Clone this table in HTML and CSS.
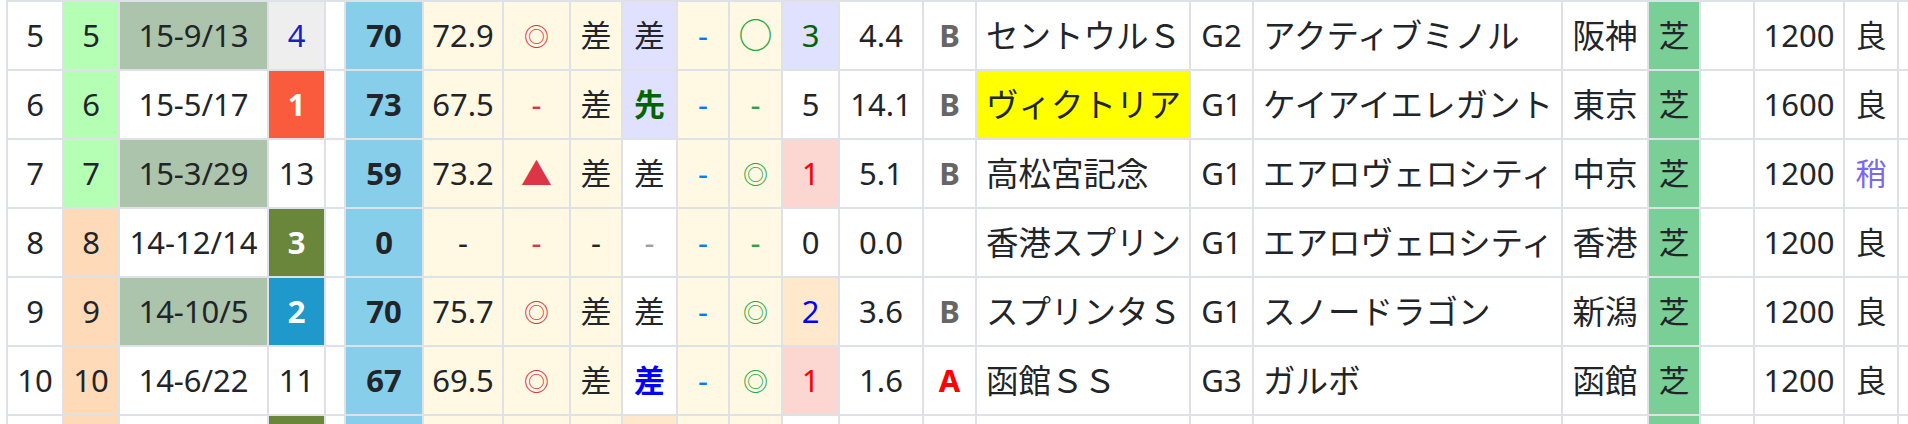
FILE: index.html
```html
<!DOCTYPE html>
<html lang="ja">
<head>
<meta charset="utf-8">
<title>戦績</title>
<link rel="stylesheet" href="styles.css">
</head>
<body>
<div class="wrap">
<table class="results">
<colgroup>
<col class="w56"><col class="w56"><col class="w149"><col class="w57"><col class="w20"><col class="w78"><col class="w80"><col class="w67"><col class="w52"><col class="w55"><col class="w52"><col class="w53"><col class="w57"><col class="w84"><col class="w53"><col class="w214"><col class="w63"><col class="w309"><col class="w86"><col class="w52"><col class="w54"><col class="w90"><col class="w54"><col class="w100">
</colgroup>
<tbody>
<tr class="edge">
<td></td><td class="bg-green"></td><td class="bg-sage"></td><td class="bg-red"></td><td></td><td class="bg-sky"></td><td class="bg-cs"></td><td class="bg-cs"></td><td class="bg-cs"></td><td class="bg-lav"></td><td class="bg-cs"></td><td class="bg-cs"></td><td class="bg-pink"></td><td></td><td></td><td></td><td></td><td></td><td></td><td class="bg-turf"></td><td></td><td></td><td></td><td></td>
</tr>
<tr>
<td>5</td><td class="bg-green">5</td><td class="bg-sage">15-9/13</td><td class="bg-gray c-mb">4</td><td></td><td class="bg-sky score">70</td><td class="bg-cs">72.9</td><td class="bg-cs c-red sym">◎</td><td class="bg-cs">差</td><td class="bg-lav">差</td><td class="bg-cs c-blue">-</td><td class="bg-cs c-green circle">○</td><td class="bg-lav c-dg">3</td><td>4.4</td><td class="grade-b">B</td><td class="l">セントウルＳ</td><td>G2</td><td class="l">アクティブミノル</td><td class="ja">阪神</td><td class="bg-turf">芝</td><td></td><td>1200</td><td>良</td><td></td>
</tr>
<tr>
<td>6</td><td class="bg-green">6</td><td>15-5/17</td><td class="bg-red rank">1</td><td></td><td class="bg-sky score">73</td><td class="bg-cs">67.5</td><td class="bg-cs c-red">-</td><td class="bg-cs">差</td><td class="bg-lav c-dg strong">先</td><td class="bg-cs c-blue">-</td><td class="bg-cs c-green">-</td><td>5</td><td>14.1</td><td class="grade-b">B</td><td class="l bg-yellow">ヴィクトリア</td><td>G1</td><td class="l">ケイアイエレガント</td><td class="ja">東京</td><td class="bg-turf">芝</td><td></td><td>1600</td><td>良</td><td></td>
</tr>
<tr>
<td>7</td><td class="bg-green">7</td><td class="bg-sage">15-3/29</td><td>13</td><td></td><td class="bg-sky score">59</td><td class="bg-cs">73.2</td><td class="bg-cs c-red">▲</td><td class="bg-cs">差</td><td>差</td><td class="bg-cs c-blue">-</td><td class="bg-cs c-green sym">◎</td><td class="bg-pink c-r">1</td><td>5.1</td><td class="grade-b">B</td><td class="l">高松宮記念</td><td>G1</td><td class="l">エアロヴェロシティ</td><td class="ja">中京</td><td class="bg-turf">芝</td><td></td><td>1200</td><td class="c-slate">稍</td><td></td>
</tr>
<tr>
<td>8</td><td class="bg-peach">8</td><td>14-12/14</td><td class="bg-olive rank">3</td><td></td><td class="bg-sky score">0</td><td class="bg-cs">-</td><td class="bg-cs c-red">-</td><td class="bg-cs">-</td><td class="c-gray">-</td><td class="bg-cs c-blue">-</td><td class="bg-cs c-green">-</td><td>0</td><td>0.0</td><td></td><td class="l">香港スプリン</td><td>G1</td><td class="l">エアロヴェロシティ</td><td class="ja">香港</td><td class="bg-turf">芝</td><td></td><td>1200</td><td>良</td><td></td>
</tr>
<tr>
<td>9</td><td class="bg-peach">9</td><td class="bg-sage">14-10/5</td><td class="bg-blue rank">2</td><td></td><td class="bg-sky score">70</td><td class="bg-cs">75.7</td><td class="bg-cs c-red sym">◎</td><td class="bg-cs">差</td><td>差</td><td class="bg-cs c-blue">-</td><td class="bg-cs c-green sym">◎</td><td class="bg-almond c-b">2</td><td>3.6</td><td class="grade-b">B</td><td class="l">スプリンタＳ</td><td>G1</td><td class="l">スノードラゴン</td><td class="ja">新潟</td><td class="bg-turf">芝</td><td></td><td>1200</td><td>良</td><td></td>
</tr>
<tr>
<td>10</td><td class="bg-peach">10</td><td>14-6/22</td><td>11</td><td></td><td class="bg-sky score">67</td><td class="bg-cs">69.5</td><td class="bg-cs c-red sym">◎</td><td class="bg-cs">差</td><td class="c-b strong">差</td><td class="bg-cs c-blue">-</td><td class="bg-cs c-green sym">◎</td><td class="bg-pink c-r">1</td><td>1.6</td><td class="grade-a">A</td><td class="l">函館ＳＳ</td><td>G3</td><td class="l">ガルボ</td><td class="ja">函館</td><td class="bg-turf">芝</td><td></td><td>1200</td><td>良</td><td></td>
</tr>
<tr class="edge">
<td></td><td class="bg-peach"></td><td></td><td class="bg-olive"></td><td></td><td class="bg-sky"></td><td class="bg-cs"></td><td class="bg-cs"></td><td class="bg-cs"></td><td class="bg-almond"></td><td class="bg-cs"></td><td class="bg-cs"></td><td></td><td></td><td></td><td></td><td></td><td></td><td></td><td class="bg-turf"></td><td></td><td></td><td></td><td></td>
</tr>
</tbody>
</table>
</div>
</body>
</html>
```

FILE: styles.css
```css
html, body {
  margin: 0;
  padding: 0;
  overflow: hidden;
  background: #ffffff;
}

.wrap {
  padding-left: 6px;
  margin-top: -69px;
}

.results {
  table-layout: fixed;
  width: 1993px;
  border-collapse: separate;
  border-spacing: 0;
  border-top: 2px solid #dee2e6;
  border-left: 2px solid #dee2e6;
  font-family: "Noto Sans", "Noto Sans CJK JP", sans-serif;
  font-size: 31px;
  color: #212529;
}

.results td {
  box-sizing: border-box;
  height: 69px;
  padding: 0 4px;
  border-right: 2px solid #dee2e6;
  border-bottom: 2px solid #dee2e6;
  text-align: center;
  vertical-align: middle;
  white-space: nowrap;
  overflow: hidden;
  line-height: 1.2;
}

.results td.l {
  text-align: left;
  padding-left: 9px;
  font-size: 32.5px;
}

.results td.ja { font-size: 32.5px; }

.w20 { width: 20px; }
.w52 { width: 52px; }
.w53 { width: 53px; }
.w54 { width: 54px; }
.w55 { width: 55px; }
.w56 { width: 56px; }
.w57 { width: 57px; }
.w63 { width: 63px; }
.w67 { width: 67px; }
.w78 { width: 78px; }
.w80 { width: 80px; }
.w84 { width: 84px; }
.w86 { width: 86px; }
.w90 { width: 90px; }
.w100 { width: 100px; }
.w149 { width: 149px; }
.w214 { width: 214px; }
.w309 { width: 309px; }

/* backgrounds */
.bg-green { background: #b4ffb4; }
.bg-peach { background: #ffdab9; }
.bg-sage { background: #abc4ab; }
.bg-gray { background: #eeeeee; }
.bg-red { background: #fa5b3d; }
.bg-olive { background: #6a863b; }
.bg-blue { background: #1f98cb; }
.bg-sky { background: #87ceeb; }
.bg-cs { background: #fff9e3; }
.bg-lav { background: #e0e0ff; }
.bg-pink { background: #fcd7d2; }
.bg-almond { background: #ffe8cc; }
.bg-yellow { background: #ffff00; }
.bg-turf { background: #7acf97; }

/* text treatments */
.rank { color: #ffffff; font-weight: 700; }
.score { font-weight: 700; }
.strong { font-weight: 700; }
.c-red { color: #dc3545; }
.c-blue { color: #007bff; }
.c-green { color: #28a745; }
.c-dg { color: #006400; }
.c-mb { color: #1a22c4; }
.c-r { color: #ff0000; }
.c-b { color: #0000ff; }
.c-gray { color: #a0a0a0; }
.c-slate { color: #7b68ee; }
.grade-b { color: #666666; font-weight: 700; }
.grade-a { color: #ff0000; font-weight: 700; }
.results td.sym { font-size: 25px; }
.results td.circle { font-size: 34px; }
```
